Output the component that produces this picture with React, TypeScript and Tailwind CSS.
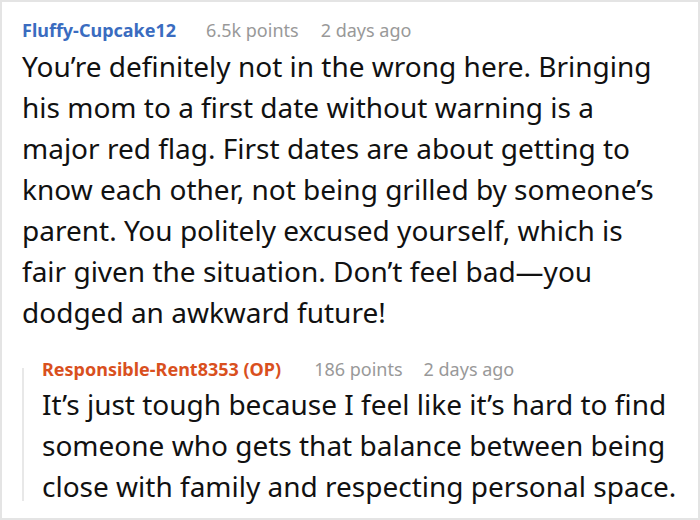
import React from "react";

export default function App() {
  const font = { fontFamily: '"Noto Sans", "Open Sans", sans-serif' };
  return (
    <div
      className="w-[700px] h-[520px] bg-white border-2 border-[#e4e4e4] box-border overflow-hidden px-[20px] pt-[14px]"
      style={font}
    >
      <div className="flex items-center h-[28px] text-[18px] leading-[28px] whitespace-nowrap">
        <span className="font-bold text-[#3a6cc0]">Fluffy-Cupcake12</span>
        <span className="ml-[30px] text-[#999999]">6.5k points</span>
        <span className="ml-[22px] text-[#999999]">2 days ago</span>
      </div>
      <p className="mt-[2px] pr-[18px] text-[28px] leading-[41px] text-[#111111]">
        You’re definitely not in the wrong here. Bringing his mom to a first date without warning is a
        major red flag. First dates are about getting to know each other, not being grilled by someone’s
        parent. You politely excused yourself, which is fair given the situation. Don’t feel bad—you
        dodged an awkward future!
      </p>
      <div className="flex mt-[22px]">
        <div className="w-[2px] bg-[#e8e8e8] mt-[13px] mb-[6px] shrink-0" />
        <div className="pl-[18px]">
          <div className="flex items-center h-[28px] text-[18px] leading-[28px] whitespace-nowrap">
            <span className="font-bold text-[#d9501e]">Responsible-Rent8353 (OP)</span>
            <span className="ml-[33px] text-[#999999]">186 points</span>
            <span className="ml-[21px] text-[#999999]">2 days ago</span>
          </div>
          <p className="mt-[1px] text-[28px] leading-[41px] text-[#111111]">
            It’s just tough because I feel like it’s hard to find someone who gets that balance between being
            close with family and respecting personal space.
          </p>
        </div>
      </div>
    </div>
  );
}
